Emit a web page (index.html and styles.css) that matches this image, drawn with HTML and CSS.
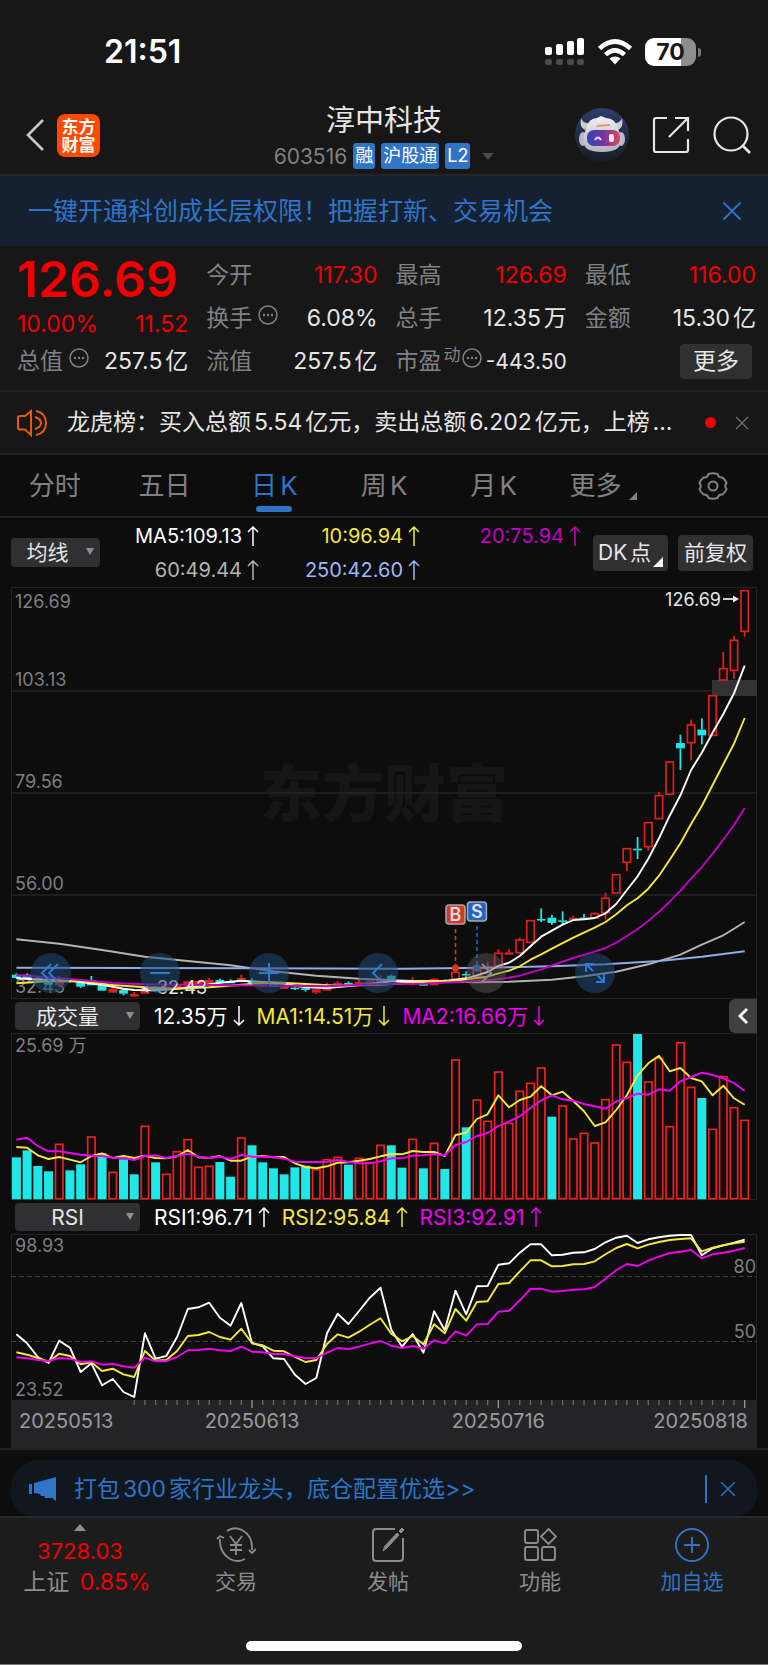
FILE: index.html
```html
<!DOCTYPE html>
<html lang="zh-CN">
<head>
<meta charset="utf-8">
<meta name="viewport" content="width=device-width, initial-scale=1">
<title>淳中科技 603516</title>
<link rel="stylesheet" href="styles.css">
</head>
<body>
<svg class="defs" aria-hidden="true">
  <symbol id="up" viewBox="0 0 12 20"><path d="M6 20V1M1 6L6 1L11 6" fill="none" stroke="currentColor" stroke-width="1.500"/></symbol>
  <symbol id="down" viewBox="0 0 12 20"><path d="M6 0V19M1 14L6 19L11 14" fill="none" stroke="currentColor" stroke-width="1.500"/></symbol>
  <symbol id="cross" viewBox="0 0 20 20"><path d="M1.500 1.500L18.500 18.500M18.500 1.500L1.500 18.500" fill="none" stroke="currentColor" stroke-width="1.800"/></symbol>
  <symbol id="info" viewBox="0 0 20 20"><circle cx="10" cy="10" r="9" fill="none" stroke="currentColor" stroke-width="1.500"/><g fill="currentColor"><circle cx="6" cy="10" r="1.200"/><circle cx="10" cy="10" r="1.200"/><circle cx="14" cy="10" r="1.200"/></g></symbol>
</svg>

<div class="status">
  <time class="clock">21:51</time>
  <div class="status-icons">
    <svg width="40" height="28" viewBox="0 0 40 28"><g fill="#fff"><rect x="0" y="9" width="7" height="8" rx="2"/><rect x="11" y="6" width="7" height="11" rx="2"/><rect x="22" y="3" width="7" height="14" rx="2"/><rect x="32" y="0" width="7" height="17" rx="2"/></g><g fill="#4a4a4a"><rect x="0" y="21" width="7" height="6" rx="2"/><rect x="11" y="21" width="7" height="6" rx="2"/><rect x="22" y="21" width="7" height="6" rx="2"/><rect x="32" y="21" width="7" height="6" rx="2"/></g></svg>
    <svg width="36" height="26" viewBox="0 0 36 26"><g fill="none" stroke="#fff" stroke-width="4.600"><path d="M2.500 9.500Q18-4.500 33.500 9.500"/><path d="M8.500 15.600Q18 7 27.500 15.600"/></g><path d="M12.500 19.600Q18 15.200 23.500 19.600L18 25.500Z" fill="#fff"/></svg>
    <span class="battery"><span class="battery-level">70</span></span>
  </div>
</div>

<header class="header">
  <div class="header-left">
    <button class="icon-btn" aria-label="返回"><svg width="20" height="32" viewBox="0 0 20 32"><path d="M18 1L3 16L18 31" fill="none" stroke="#c8c8c8" stroke-width="2.600"/></svg></button>
    <span class="logo">东方<br>财富</span>
  </div>
  <div class="header-title">
    <h1>淳中科技</h1>
    <div class="code-row"><span>603516</span><span class="badge">融</span><span class="badge">沪股通</span><span class="badge">L2</span><i class="caret"></i></div>
  </div>
  <div class="header-right">
    <button class="icon-btn" aria-label="助手"><svg width="54" height="54" viewBox="0 0 54 54">
      <defs><linearGradient id="sky" x2="0" y2="1"><stop stop-color="#2c3d68"/><stop offset="1" stop-color="#181c26"/></linearGradient><linearGradient id="visor" x2="1"><stop stop-color="#2f42b8"/><stop offset=".5" stop-color="#7a35a0"/><stop offset="1" stop-color="#d8485f"/></linearGradient><linearGradient id="shell" x2="0" y2="1"><stop stop-color="#f0f0f4"/><stop offset="1" stop-color="#b4b2bc"/></linearGradient></defs>
      <circle cx="27" cy="27" r="27" fill="url(#sky)"/>
      <path d="M6 10Q4 19 10 22L15 15Q8 16 6 10ZM47 10Q49 19 43 22L38 15Q45 16 47 10Z" fill="#cdcbd2"/>
      <ellipse cx="8" cy="31" rx="4" ry="7" fill="#b9b7c2"/><ellipse cx="46" cy="31" rx="4" ry="7" fill="#b9b7c2"/>
      <path d="M11 20Q14 10 22 10L26 8L31 10Q40 10 43 20Q48 34 43 40Q38 44 27 44Q16 44 11 40Q6 34 11 20Z" fill="url(#shell)"/>
      <rect x="12" y="22" width="33" height="16" rx="7" fill="url(#visor)"/>
      <path d="M20 32Q23 27 26 32" fill="none" stroke="#dfe6ff" stroke-width="2"/><rect x="34" y="26" width="5" height="8" rx="2" fill="#fbe9f4"/>
      <path d="M22 17L35 16V18L21 19Z" fill="#d99b6c"/></svg></button>
    <button class="icon-btn" aria-label="分享"><svg width="38" height="38" viewBox="0 0 38 38"><path d="M15 2H4Q2 2 2 4V34Q2 36 4 36H34Q36 36 36 34V23M23 2H36V15M36 2L17 21" fill="none" stroke="#e6e6e6" stroke-width="2.200"/></svg></button>
    <button class="icon-btn" aria-label="搜索"><svg width="38" height="38" viewBox="0 0 38 38"><circle cx="18" cy="18" r="16.500" fill="none" stroke="#e6e6e6" stroke-width="2.200"/><path d="M29 29L37 37" stroke="#e6e6e6" stroke-width="2.600"/></svg></button>
  </div>
</header>

<section class="promo"><a href="#open">一键开通科创成长层权限！把握打新、交易机会</a><button class="icon-btn" aria-label="关闭"><svg width="20" height="20"><use href="#cross"/></svg></button></section>

<section class="quote">
  <div class="q-main"><strong>126.69</strong><div class="q-cell red"><span>10.00%</span><span>11.52</span></div></div>
  <div class="q-cell"><span class="label">今开</span><span class="red">117.30</span></div>
  <div class="q-cell"><span class="label">最高</span><span class="red">126.69</span></div>
  <div class="q-cell"><span class="label">最低</span><span class="red">116.00</span></div>
  <div class="q-cell"><span class="label">换手<svg class="info"><use href="#info"/></svg></span><span>6.08%</span></div>
  <div class="q-cell"><span class="label">总手</span><span>12.35万</span></div>
  <div class="q-cell"><span class="label">金额</span><span>15.30亿</span></div>
  <div class="q-cell"><span class="label">总值<svg class="info"><use href="#info"/></svg></span><span>257.5亿</span></div>
  <div class="q-cell"><span class="label">流值</span><span>257.5亿</span></div>
  <div class="q-cell compact"><span class="label">市盈<small>动</small><svg class="info tight"><use href="#info"/></svg></span><span>-443.50</span></div>
  <div class="q-cell end"><button class="more">更多</button></div>
</section>

<section class="news">
  <svg width="32" height="28" viewBox="0 0 32 28"><g fill="none" stroke="#e8590c" stroke-width="2"><path d="M14 2V26L8 20.500H3Q1 20.500 1 18.500V9Q1 7 3 7H8Z"/><path d="M18 8Q24 10 24 14Q24 18 18 20M19 2Q29 4 29 14Q29 24 19 26"/></g></svg>
  <p>龙虎榜：买入总额5.54亿元，卖出总额6.202亿元，上榜...</p>
  <i class="dot"></i>
  <button class="icon-btn" aria-label="关闭"><svg width="14" height="14"><use href="#cross"/></svg></button>
</section>

<nav class="tabs">
  <button>分时</button><button>五日</button><button class="active">日K</button><button>周K</button><button>月K</button><button class="has-corner">更多</button>
  <button aria-label="设置"><svg width="30" height="28" viewBox="0 0 30 28"><path d="M10.500 2Q15 .5 19.500 2Q20.500 6 24.500 5.500Q28 9 28.500 11Q26 14 28.500 17Q27.500 20 24.500 22.500Q20.500 22 19.500 26Q15 27.500 10.500 26Q9.500 22 5.500 22.500Q2.500 20 1.500 17Q4 14 1.500 11Q2.500 8 5.500 5.500Q9.500 6 10.500 2Z" fill="none" stroke="currentColor" stroke-width="2"/><circle cx="15" cy="14" r="4.500" fill="none" stroke="currentColor" stroke-width="2"/></svg></button>
</nav>

<main class="charts">
  <div class="legend">
    <button class="picker short">均线</button>
    <div class="ma-grid">
      <span class="c-white">MA5:109.13<svg class="arrow"><use href="#up"/></svg></span>
      <span class="c-yellow">10:96.94<svg class="arrow"><use href="#up"/></svg></span>
      <span class="c-purple">20:75.94<svg class="arrow"><use href="#up"/></svg></span>
      <span class="c-gray">60:49.44<svg class="arrow"><use href="#up"/></svg></span>
      <span class="c-blue">250:42.60<svg class="arrow"><use href="#up"/></svg></span>
    </div>
    <div class="legend-actions"><button class="chip corner">DK点</button><button class="chip">前复权</button></div>
  </div>

  <div class="price">
    <svg id="price" class="plot" viewBox="0 0 746 412" role="img" aria-label="日K线图"></svg>
    <div class="controls">
      <button aria-label="快退"><svg viewBox="0 0 40 40"><path d="M20 11L11 20L20 29M27 11L18 20L27 29"/></svg></button>
      <button aria-label="缩小"><svg viewBox="0 0 40 40"><path d="M10 20H30"/></svg></button>
      <button aria-label="放大"><svg viewBox="0 0 40 40"><path d="M10 20H30M20 10V30"/></svg></button>
      <button aria-label="向左"><svg viewBox="0 0 40 40"><path d="M24 11L15 20L24 29"/></svg></button>
      <button class="off" aria-label="向右"><svg viewBox="0 0 40 40"><path d="M16 11L25 20L16 29"/></svg></button>
      <button aria-label="全屏"><svg viewBox="0 0 40 40"><path d="M11 19V11H19M11 11L18 18M29 21V29H21M29 29L22 22"/></svg></button>
    </div>
  </div>

  <div class="sub-head">
    <button class="picker">成交量</button>
    <span class="c-white">12.35万<svg class="arrow"><use href="#down"/></svg></span>
    <span class="c-yellow">MA1:14.51万<svg class="arrow"><use href="#down"/></svg></span>
    <span class="c-magenta">MA2:16.66万<svg class="arrow"><use href="#down"/></svg></span>
    <button class="drawer" aria-label="展开"><svg width="12" height="18" viewBox="0 0 12 18"><path d="M10 2L3 9L10 16" fill="none" stroke="#fff" stroke-width="2.800"/></svg></button>
  </div>
  <svg id="volume" class="plot" viewBox="0 0 746 167" role="img" aria-label="成交量"></svg>

  <div class="sub-head">
    <button class="picker">RSI</button>
    <span class="c-white">RSI1:96.71<svg class="arrow"><use href="#up"/></svg></span>
    <span class="c-yellow">RSI2:95.84<svg class="arrow"><use href="#up"/></svg></span>
    <span class="c-magenta">RSI3:92.91<svg class="arrow"><use href="#up"/></svg></span>
  </div>
  <svg id="rsi" class="plot" viewBox="0 0 746 214" role="img" aria-label="RSI"></svg>
</main>

<aside class="tip">
  <div class="tip-bar">
    <svg width="28" height="24" viewBox="0 0 28 24"><path d="M0 7H3V17H0ZM5 6L27 0V24L24 22V21H16L15 19H12L11 17L5 16Z" fill="#2f74c6"/></svg>
    <a href="#tip">打包300家行业龙头，底仓配置优选&gt;&gt;</a>
    <button class="icon-btn tip-close" aria-label="关闭"><svg width="16" height="16"><use href="#cross"/></svg></button>
  </div>
</aside>

<footer class="bottom">
  <nav class="bottom-nav">
    <a class="index" href="#index"><i class="tri"></i><span class="red">3728.03</span><span class="change">上证 <b class="red">0.85%</b></span></a>
    <a href="#trade"><svg width="40" height="36" viewBox="0 0 40 36"><g fill="none" stroke="currentColor" stroke-width="1.800"><path d="M11 4Q18-1 26 3Q37 9 36 23M40 22L36 26L33 23M29 32Q22 36 14 32Q3 25 4 12M1 12L4 9L8 11"/><path d="M14 9L20 17L26 9M20 17V28M14 18H26M14 23H26"/></g></svg>交易</a>
    <a href="#post"><svg width="34" height="36" viewBox="0 0 34 36"><path d="M24 2H5Q2 2 2 5V31Q2 34 5 34H29Q32 34 32 31V11" fill="none" stroke="currentColor" stroke-width="2"/><path d="M12 24L14 19L26 6L28 8L16 21ZM28 4L31 1L33 3L30 6Z" fill="currentColor" stroke="currentColor"/></svg>发帖</a>
    <a href="#tools"><svg width="34" height="34" viewBox="0 0 34 34"><g fill="none" stroke="currentColor" stroke-width="1.900"><rect x="2" y="2" width="13" height="13" rx="2"/><rect x="2" y="19" width="13" height="13" rx="2"/><rect x="19" y="19" width="13" height="13" rx="2"/><path d="M25.500 1L33 8.500L25.500 16L18 8.500Z"/></g></svg>功能</a>
    <a class="add" href="#add"><svg width="34" height="36" viewBox="0 0 34 36"><g fill="none" stroke="currentColor" stroke-width="1.900"><circle cx="17" cy="18" r="16"/><path d="M9 18H25M17 10V26"/></g></svg>加自选</a>
  </nav>
  <div class="home"></div>
</footer>
<script src="chart.js"></script>
</body>
</html>
```
FILE: styles.css
```css
* { box-sizing: border-box; }
body {
  margin: 0;
  background: #0d0d0d;
  color: #e6e6e6;
  font-family: Inter, "Noto Sans CJK SC", sans-serif;
  font-size: 23px;
  line-height: 1;
  text-autospace: normal;
}
button {
  font: inherit;
  color: inherit;
  background: none;
  border: 0;
  padding: 0;
  cursor: pointer;
}
a { color: inherit; text-decoration: none; }
svg { display: block; flex: none; }
.defs { position: absolute; width: 0; height: 0; }
.icon-btn { display: block; flex: none; }
.red { color: #f00000; }

/* status bar */
.status {
  display: flex;
  justify-content: space-between;
  align-items: center;
  height: 104px;
  padding: 0 72px 0 104px;
  background: #171717;
  color: #fff;
}
.clock { font-size: 32px; font-weight: 600; }
.status-icons { display: flex; align-items: center; gap: 12px; }
.battery {
  position: relative;
  width: 51px;
  height: 28px;
  border-radius: 9px;
  background: linear-gradient(90deg, #fff 70%, #8e8e8e 70%);
  color: #171717;
  text-align: center;
}
.battery::after {
  content: "";
  position: absolute;
  right: -5px;
  top: 10px;
  width: 3px;
  height: 9px;
  border-radius: 0 3px 3px 0;
  background: #777;
}
.battery-level { font-size: 23px; font-weight: 700; line-height: 28px; }

/* header */
.header {
  display: grid;
  grid-template-columns: 1fr auto 1fr;
  height: 72px;
  padding: 0 17px;
  background: #171717;
  border-bottom: 2px solid #262626;
}
.header-left { display: flex; align-items: center; gap: 12px; padding: 0 0 8px 8px; }
.logo {
  width: 43px;
  height: 43px;
  padding-top: 4px;
  border-radius: 8px;
  background: #ff4800;
  color: #fff;
  font-size: 17px;
  font-weight: 700;
  line-height: 18px;
  text-align: center;
}
.header-title { text-align: center; }
.header h1 { margin: 0; font-size: 29px; font-weight: 400; line-height: 34px; }
.code-row {
  display: flex;
  align-items: center;
  gap: 6px;
  height: 36px;
  color: #808085;
  font-size: 21px;
}
.badge {
  padding: 0 2px;
  border-radius: 3px;
  background: #2f74c6;
  color: #fff;
  font-size: 18px;
  line-height: 26px;
}
.caret {
  margin-left: 6px;
  border: 6px solid transparent;
  border-top: 7px solid #4a4a4a;
  border-bottom: 0;
}
.header-right { display: flex; justify-content: flex-end; align-items: center; gap: 23px; padding-bottom: 8px; }

/* promotion */
.promo {
  display: flex;
  justify-content: space-between;
  align-items: center;
  height: 70px;
  padding: 0 26px 0 28px;
  background: #152131;
  color: #2f74c6;
  font-size: 25px;
}

/* quote */
.quote {
  display: grid;
  grid-template-columns: repeat(4, 1fr);
  grid-template-rows: repeat(3, 43px);
  column-gap: 18px;
  height: 146px;
  padding: 8px 12px 0 17px;
  background: #171717;
  border-bottom: 2px solid #202020;
}
.q-main {
  grid-row: span 2;
  display: flex;
  flex-direction: column;
  justify-content: space-between;
  padding-bottom: 4px;
}
.q-main strong { color: #f00000; font-size: 50px; font-weight: 600; line-height: 50px; }
.q-cell { display: flex; justify-content: space-between; align-items: center; white-space: nowrap; }
.q-cell.end { justify-content: flex-end; }
.q-cell.compact { font-size: 21px; }
.label { display: flex; align-items: center; color: #808085; font-size: 23px; }
.label small { font-size: 17px; margin: 0 0 12px 2px; }
.info { width: 20px; height: 20px; margin: 0 0 8px 6px; }
.info.tight { margin-left: 1px; }
.more {
  width: 72px;
  height: 35px;
  margin-right: 4px;
  border-radius: 4px;
  background: #303030;
}

/* news */
.news {
  display: flex;
  align-items: center;
  height: 63px;
  padding: 0 19px 0 17px;
  background: #171717;
  border-bottom: 2px solid #242424;
}
.news p {
  flex: 1;
  margin: 0 0 2px 18px;
  line-height: 32px;
  white-space: nowrap;
  overflow: hidden;
}
.dot { width: 11px; height: 11px; margin-right: 19px; border-radius: 50%; background: #f00000; }
.news .icon-btn { color: #707070; }

/* period tabs */
.tabs {
  display: grid;
  grid-template-columns: repeat(7, 1fr);
  height: 63px;
  border-bottom: 2px solid #222;
  color: #808085;
  font-size: 26px;
}
.tabs button { position: relative; display: flex; align-items: center; justify-content: center; }
.tabs .active { color: #2f74c6; }
.tabs .active::after {
  content: "";
  position: absolute;
  bottom: 4px;
  width: 36px;
  height: 6px;
  border-radius: 3px;
  background: #2f74c6;
}
.has-corner::after {
  content: "";
  margin: 20px 0 0 8px;
  border: 4px solid #808085;
  border-top-color: transparent;
  border-left-color: transparent;
}

/* charts */
.charts { padding: 0 11px; border-bottom: 2px solid #202020; }
.legend { display: flex; align-items: center; height: 69px; font-size: 20px; }
.picker {
  display: flex;
  align-items: center;
  justify-content: center;
  position: relative;
  width: 125px;
  height: 28px;
  padding-right: 20px;
  border-radius: 4px;
  background: #303033;
  font-size: 21px;
}
.picker.short { width: 89px; height: 29px; padding-right: 16px; }
.picker::after {
  content: "";
  position: absolute;
  right: 6px;
  top: 10px;
  border: 4px solid transparent;
  border-top: 7px solid #909090;
  border-bottom: 0;
}
.ma-grid {
  display: grid;
  grid-template-columns: 159px 161px 161px;
  grid-auto-rows: 34px;
  justify-items: end;
  align-items: center;
  margin-right: auto;
}
.ma-grid span, .sub-head span { display: flex; align-items: center; gap: 5px; white-space: nowrap; }
.arrow { width: 12px; height: 20px; }
.c-white { color: #fff; }
.c-yellow { color: #f5e83c; }
.c-purple { color: #c400c4; }
.c-magenta { color: #f000f0; }
.c-gray { color: #b4b4b4; }
.c-blue { color: #9db8f5; }
.legend-actions { display: flex; gap: 10px; padding-right: 4px; }
.chip {
  position: relative;
  width: 75px;
  height: 36px;
  border-radius: 4px;
  background: #303033;
  font-size: 21px;
  white-space: nowrap;
}
.chip.corner { padding-right: 12px; }
.chip.corner::after {
  content: "";
  position: absolute;
  right: 5px;
  bottom: 4px;
  border: 5px solid #fff;
  border-top-color: transparent;
  border-left-color: transparent;
}
.plot { width: 100%; height: auto; font-size: 18px; }
.price { position: relative; }
.controls {
  position: absolute;
  left: 2.7%;
  right: 19%;
  bottom: 6px;
  display: flex;
  justify-content: space-between;
}
.controls button {
  width: 40px;
  height: 40px;
  border-radius: 50%;
  background: rgba(32, 72, 116, .55);
}
.controls .off { background: rgba(90, 90, 94, .45); }
.controls path { fill: none; stroke: #2f7ad2; stroke-width: 2; }
.controls .off path { stroke: #8a8a8e; }
.sub-head {
  display: flex;
  align-items: center;
  gap: 12px;
  height: 34px;
  padding-left: 4px;
  font-size: 21px;
  text-autospace: no-autospace;
}
.sub-head .picker { margin-right: 2px; }
.drawer {
  display: grid;
  place-items: center;
  width: 28px;
  height: 34px;
  margin-left: auto;
  border-radius: 6px 0 0 6px;
  background: #404040;
}

/* tip */
.tip { padding: 10px 11px 0; background: #0d0d0d; }
.tip-bar {
  display: flex;
  align-items: center;
  height: 56px;
  padding: 2px 21px 0 18px;
  border-radius: 28px 28px 22px 22px;
  background: #10171f;
  color: #2f74c6;
}
.tip-bar a { margin-left: 17px; }
.tip-close { margin-left: auto; padding: 6px 0 6px 13px; border-left: 2px solid #2f74c6; }

/* bottom bar */
.bottom { background: #1c1c1c; border-top: 2px solid #292929; border-bottom: 1px solid #777; }
.bottom-nav { display: grid; grid-template-columns: 160fr repeat(4, 152fr); height: 123px; color: #8c8c90; font-size: 21px; }
.bottom-nav a { display: flex; flex-direction: column; align-items: center; gap: 8px; padding-top: 9px; }
.bottom-nav svg { height: 36px; }
.bottom-nav .index { gap: 9px; padding-top: 6px; font-size: 22px; }
.bottom-nav b { margin-left: 4px; font-weight: 400; }
.bottom-nav .change { padding-left: 14px; font-size: 23px; }
.bottom-nav .add { color: #2f74c6; }
.tri { border: 6px solid transparent; border-top: 0; border-bottom: 7px solid #909090; }
.home { width: 36%; height: 10px; margin: 0 auto 13px; border-radius: 5px; background: #fff; }

/* marks inside the plots */
.frame { fill: none; stroke: #232325; }
.axis-label { fill: #7e7e84; }
.axis-date { fill: #9a9a9e; font-size: 20px; }
.mark { fill: #e6e6e6; }
.watermark { fill: #161616; font-size: 62px; font-weight: 900; }
.dash { stroke: #444448; stroke-dasharray: 5 3; }
```
FILE: chart.js
```javascript
const NS = 'http://www.w3.org/2000/svg';
const STEP = 10.71;
const RED = '#e01e1e';
const CYAN = '#20e6e6';
const px = i => 5.4 + STEP * i;

function add(svg, name, attrs, text) {
  const el = document.createElementNS(NS, name);
  for (const key in attrs) el.setAttribute(key, attrs[key]);
  if (text) el.textContent = text;
  svg.appendChild(el);
}
function rule(svg, x1, y1, x2, y2, color, width) {
  add(svg, 'line', { x1, y1, x2, y2, stroke: color, 'stroke-width': width || 1 });
}
function label(svg, x, y, text, cls, anchor) {
  add(svg, 'text', { x, y, class: cls || 'axis-label', 'text-anchor': anchor || 'start' }, text);
}
// pts: [index, level] pairs; levels are in thirds of a unit above the offset
function curve(svg, pts, offset, color, width) {
  add(svg, 'polyline', {
    points: pts.map(p => px(p[0]).toFixed(1) + ',' + (p[1] / 3 - offset).toFixed(1)).join(' '),
    fill: 'none', stroke: color, 'stroke-width': width || 1.9, 'stroke-linejoin': 'round'
  });
}
const series = list => list.map((v, i) => [i, v]);

/* daily candles: direction, high, body top, body bottom, low */
const candles = `c 1180 1184 1194 1196|c 1180 1184 1198 1200|c 1190 1194 1206 1208|c 1200 1206 1214 1216
r 1188 1206 1216 1218|c 1196 1200 1206 1208|c 1200 1206 1220 1224|c 1188 1200 1216 1216|c 1212 1214 1232 1232
r 1224 1226 1238 1238|c 1226 1230 1241 1246|r 1236 1242 1250 1250|r 1222 1226 1241 1241|c 1218 1220 1234 1234
r 1214 1220 1230 1230|r 1210 1216 1226 1226|r 1202 1204 1218 1218|r 1200 1203 1214 1214|r 1194 1200 1210 1210
c 1196 1200 1206 1210|c 1198 1203 1210 1210|r 1184 1194 1204 1204|c 1194 1202 1212 1218|r 1208 1210 1220 1220
c 1208 1212 1220 1220|r 1214 1218 1227 1227|c 1220 1223 1227 1230|c 1222 1225 1230 1235|r 1226 1228 1238 1242
r 1208 1218 1232 1232|r 1204 1208 1216 1216|c 1204 1209 1213 1218|r 1200 1206 1214 1214|r 1198 1202 1210 1210
r 1186 1196 1206 1206|c 1184 1187 1200 1200|c 1204 1208 1212 1214|r 1192 1206 1214 1216|c 1210 1212 1217 1217
r 1194 1196 1216 1216|c 1198 1200 1204 1206|r 1160 1177 1198 1200|c 1174 1182 1186 1194|r 1155 1161 1190 1190
r 1145 1158 1166 1170|r 1108 1120 1158 1158|r 1108 1117 1124 1124|r 1073 1080 1118 1122|r 1020 1022 1087 1087
c 985 1017 1020 1026|c 1004 1013 1029 1034|c 994 1021 1025 1032|r 1007 1013 1020 1020|c 1002 1013 1018 1018
r 997 1001 1014 1014|r 938 955 998 1018|r 884 884 939 939|r 806 806 847 873|c 771 806 811 837|r 728 728 800 812
r 635 647 716 716|r 546 546 643 643|c 464 489 505 570|r 419 435 488 540|c 415 449 466 493|r 347 347 466 466
r 216 266 300 300|r 167 181 271 296|r 32 32 154 170`.split(/[|\n]/).map(s => s.trim().split(' '));

const price = document.getElementById('price');
label(price, 373, 230, '东方财富', 'watermark', 'middle');
add(price, 'rect', { x: 0.5, y: 0.5, width: 745, height: 411, class: 'frame' });
[104, 206, 308].forEach(y => rule(price, 0, y, 746, y, '#242426', 1.5));
label(price, 4, 21, '126.69');
label(price, 4, 99, '103.13');
label(price, 4, 201, '79.56');
label(price, 4, 303, '56.00');
label(price, 4, 406, '32.43');
add(price, 'rect', { x: 701, y: 93, width: 45, height: 16, fill: '#333335' });
candles.forEach((c, i) => {
  const [hi, top, bot, lo] = c.slice(1).map(v => v / 3 - 7);
  const color = c[0] === 'c' ? CYAN : RED;
  const x = px(i);
  rule(price, x, hi, x, top, color, 1.8);
  rule(price, x, bot, x, lo, color, 1.8);
  const hollow = c[0] === 'r' && i > 40 && bot - top > 3;
  add(price, 'rect', {
    x: x - (hollow ? 3.7 : 4.4), y: top, width: hollow ? 7.4 : 8.8, height: Math.max(1.5, bot - top),
    fill: hollow ? 'none' : color, stroke: hollow ? color : 'none', 'stroke-width': 1.7
  });
});
curve(price, [[0,1078],[4,1091],[8,1110],[12,1130],[16,1143],[20,1156],[24,1174],[28,1187],[32,1196],[37,1203],[43,1207],[46,1205],[50,1199],[53,1189],[56,1175],[59,1153],[62,1124],[64,1094],[66,1066],[67,1046],[68,1026]], 7, '#b4b4b4');
curve(price, [[0,1163],[36,1166],[44,1163],[50,1159],[55,1153],[60,1143],[64,1130],[68,1114]], 7, '#8fabe8');
curve(price, [[0,1195],[3,1200],[5,1202],[8,1214],[10,1226],[11,1230],[13,1231],[15,1226],[17,1218],[19,1208],[21,1202],[23,1206],[25,1212],[27,1222],[29,1224],[31,1218],[33,1212],[35,1204],[37,1204],[40,1203],[42,1195],[43,1186],[44,1176],[45,1158],[46,1148],[47,1128],[48,1099],[49,1070],[50,1052],[51,1034],[52,1020],[53,1018],[54,1014],[55,1000],[56,972],[57,930],[58,889],[59,836],[60,775],[61,707],[62,646],[63,570],[64,518],[65,458],[66,402],[67,340],[68,257]], 7, '#fff');
curve(price, [[0,1210],[3,1204],[6,1203],[9,1215],[12,1222],[15,1226],[18,1222],[21,1214],[24,1207],[27,1212],[30,1217],[34,1214],[38,1206],[41,1202],[43,1194],[44,1190],[45,1180],[46,1172],[47,1159],[48,1139],[49,1123],[50,1106],[52,1073],[54,1043],[55,1026],[56,1003],[57,976],[58,955],[59,926],[60,887],[61,839],[62,790],[63,732],[64,678],[65,615],[66,553],[67,491],[68,414]], 7, '#f5e83c');
curve(price, [[0,1186],[3,1192],[6,1200],[9,1209],[12,1213],[18,1215],[25,1217],[29,1219],[34,1212],[38,1211],[43,1203],[45,1198],[47,1187],[49,1168],[50,1156],[52,1134],[54,1115],[55,1104],[56,1088],[57,1068],[58,1047],[59,1023],[60,995],[61,965],[62,932],[63,896],[64,861],[65,821],[66,779],[67,735],[68,684]], 7, '#c400c4');

/* buy and sell flags */
[[41, 324, '#d23a28', 'B'], [43, 321, '#1f66c8', 'S']].forEach(([i, y, color, letter]) => {
  const x = px(i);
  add(price, 'line', { x1: x, y1: y + 18, x2: x, y2: 378, stroke: color, 'stroke-width': 1.6, 'stroke-dasharray': '4 3' });
  add(price, 'circle', { cx: x, cy: 381, r: 3.5, fill: color });
  add(price, 'rect', { x: x - 9.5, y: y - 6, width: 19, height: 19, rx: 3, fill: color, stroke: '#b0a8a8', 'stroke-width': 1.5 });
  add(price, 'text', { x, y: y + 10, fill: '#e0dede', 'font-size': 18, 'font-weight': 600, 'text-anchor': 'middle' }, letter);
});
label(price, 710, 19, '126.69', 'mark', 'end');
add(price, 'path', { d: 'M712 12H724', stroke: '#e6e6e6', 'stroke-width': 1.8 });
add(price, 'path', { d: 'M722 8.5L728 12L722 15.5Z', fill: '#e6e6e6' });
label(price, 146, 407, '32.43', 'mark');
add(price, 'path', { d: 'M130 402L137 398.5V401.2H143V402.8H137V405.5Z', fill: '#e6e6e6' });

/* volume: negative levels are falling days */
const vols = [-472,-451,-498,-514,431,-511,-493,409,-460,515,-478,-523,377,-487,521,453,417,500,497,-486,-530,412,-436,-487,-505,-523,-502,-497,507,477,470,-494,473,486,434,-436,-503,416,-505,428,-507,178,-382,298,362,214,368,272,248,202,-350,316,415,398,427,297,133,185,-102,244,173,378,126,260,-294,386,228,321,359];
const volume = document.getElementById('volume');
add(volume, 'rect', { x: 0.5, y: 0.5, width: 745, height: 166, class: 'frame' });
label(volume, 4, 19, '25.69 万');
vols.forEach((v, i) => {
  const top = Math.abs(v) / 3 - 33;
  const up = v > 0;
  add(volume, 'rect', {
    x: px(i) - (up ? 3.7 : 4.5), y: top + (up ? 0.7 : 0), width: up ? 7.4 : 9, height: (up ? 165 : 166.3) - top,
    fill: up ? 'none' : CYAN, stroke: up ? '#ee2020' : 'none', 'stroke-width': 1.7
  });
});
curve(volume, series([441,443,466,477,471,479,487,468,460,474,468,474,467,474,475,469,450,472,474,468,482,482,470,468,472,471,490,501,505,499,488,487,482,477,469,462,463,453,456,456,468,405,398,357,343,286,322,300,290,259,286,275,303,334,378,367,330,286,226,190,167,214,204,234,244,286,257,295,314]), 33, '#f5e83c');
curve(volume, series([419,413,438,454,454,459,464,467,468,473,474,480,468,466,474,468,461,470,474,470,477,465,470,470,471,476,485,486,486,485,480,486,490,490,484,475,475,467,466,462,466,435,426,408,399,378,364,349,324,301,286,298,302,312,319,326,304,294,281,284,268,272,244,231,218,225,235,249,273]), 33, '#f000f0');

const rsi = document.getElementById('rsi');
add(rsi, 'rect', { x: 0.5, y: 0.5, width: 745, height: 166, class: 'frame' });
add(rsi, 'rect', { x: 0, y: 166, width: 746, height: 48, fill: '#242427' });
[43, 108].forEach(y => add(rsi, 'line', { x1: 0, y1: y - 0.5, x2: 746, y2: y - 0.5, class: 'dash' }));
label(rsi, 4, 18, '98.93');
label(rsi, 4, 162, '23.52');
label(rsi, 745, 39, '80', 'axis-label', 'end');
label(rsi, 745, 104, '50', 'axis-label', 'end');
curve(rsi, series([403,430,471,489,422,443,516,490,556,537,576,591,400,476,468,411,327,322,308,353,377,309,429,439,475,477,524,552,534,400,341,372,333,293,263,389,440,402,458,334,391,272,343,259,258,194,190,158,133,133,166,164,158,157,147,127,113,107,129,118,112,107,105,105,166,145,136,128,119]), 34, '#fff');
curve(rsi, series([457,464,474,485,461,468,493,487,513,506,523,531,453,482,480,453,408,405,396,411,419,386,430,436,452,454,471,486,480,432,403,413,395,374,355,401,424,408,433,373,400,327,362,306,304,252,249,214,181,181,199,198,193,192,184,163,144,132,145,134,126,120,117,115,154,143,136,130,125]), 34, '#f5e83c');
curve(rsi, series([472,475,480,483,474,476,486,484,494,492,499,503,473,484,483,471,451,450,446,451,453,440,455,457,462,462,469,475,474,458,444,447,440,431,423,437,444,438,446,421,430,394,407,373,372,335,332,301,267,266,275,273,269,268,261,236,211,192,198,182,170,159,155,150,175,163,158,152,144]), 34, '#f000f0');
for (let i = 11; i < 69; i++) {
  const major = i === 22 || i === 45 || i === 68;
  rule(rsi, px(i), 166, px(i), major ? 174 : 171, major ? '#9a9a9e' : '#6a6a6e', 1.3);
}
label(rsi, 8, 194, '20250513', 'axis-date');
label(rsi, px(22), 194, '20250613', 'axis-date', 'middle');
label(rsi, px(45), 194, '20250716', 'axis-date', 'middle');
label(rsi, 737, 194, '20250818', 'axis-date', 'end');
```
